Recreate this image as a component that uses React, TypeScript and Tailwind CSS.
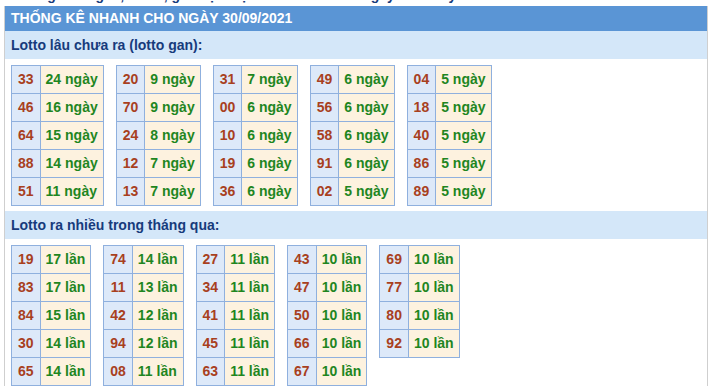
const gan: [string, string][][] = [
  [["33", "24"], ["46", "16"], ["64", "15"], ["88", "14"], ["51", "11"]],
  [["20", "9"], ["70", "9"], ["24", "8"], ["12", "7"], ["13", "7"]],
  [["31", "7"], ["00", "6"], ["10", "6"], ["19", "6"], ["36", "6"]],
  [["49", "6"], ["56", "6"], ["58", "6"], ["91", "6"], ["02", "5"]],
  [["04", "5"], ["18", "5"], ["40", "5"], ["86", "5"], ["89", "5"]],
];

const nhieu: [string, string][][] = [
  [["19", "17"], ["83", "17"], ["84", "15"], ["30", "14"], ["65", "14"]],
  [["74", "14"], ["11", "13"], ["42", "12"], ["94", "12"], ["08", "11"]],
  [["27", "11"], ["34", "11"], ["41", "11"], ["45", "11"], ["63", "11"]],
  [["43", "10"], ["47", "10"], ["50", "10"], ["66", "10"], ["67", "10"]],
  [["69", "10"], ["77", "10"], ["80", "10"], ["92", "10"]],
];

function StatTable({ rows, unit }: { rows: [string, string][]; unit: string }) {
  return (
    <table className="border-collapse border border-[#8fb0de]">
      <tbody>
        {rows.map(([num, count]) => (
          <tr key={num} className="h-[28px]">
            <td className="border border-[#8fb0de] bg-[#dde9f9] px-[6px] text-center text-[#a8401e]">{num}</td>
            <td className="border border-[#8fb0de] bg-[#fdf2df] px-[5px] text-[#1f861f]">
              {count} {unit}
            </td>
          </tr>
        ))}
      </tbody>
    </table>
  );
}

function Section({ title, tables, unit }: { title: string; tables: [string, string][][]; unit: string }) {
  return (
    <>
      <div className="h-[28px] bg-[#d4e7f9] px-[6px] flex items-center text-[14px] font-bold text-[#173b7c]">
        {title}
      </div>
      <div className="flex items-start gap-[12px] px-[6px] pt-[6px] pb-[5px] text-[14px] font-bold">
        {tables.map((t, i) => (
          <StatTable key={i} rows={t} unit={unit} />
        ))}
      </div>
    </>
  );
}

export default function App() {
  return (
    <div className="w-[711px] h-[386px] overflow-hidden bg-white" style={{ fontFamily: '"Liberation Sans", Arial, sans-serif' }}>
      {/* dòng chữ phía trên bị cắt */}
      <div className="h-[6px] overflow-hidden">
        <div className="-mt-[13px] pl-[13px] text-[14px] font-bold text-[#173b7c] leading-[16px] whitespace-nowrap">
          Thống kê lô gan, lô rơi, giải đặc biệt xổ số Miền Bắc ngày hôm nay
        </div>
      </div>
      <div className="ml-[4px] w-[704px] border-x border-[#cfcfcf] h-[380px]">
        <div className="h-[25px] bg-[#5a95d5] px-[6px] flex items-center text-[14px] font-bold text-white">
          THỐNG KÊ NHANH CHO NGÀY 30/09/2021
        </div>
        <Section title="Lotto lâu chưa ra (lotto gan):" tables={gan} unit="ngày" />
        <Section title="Lotto ra nhiều trong tháng qua:" tables={nhieu} unit="lần" />
      </div>
    </div>
  );
}
